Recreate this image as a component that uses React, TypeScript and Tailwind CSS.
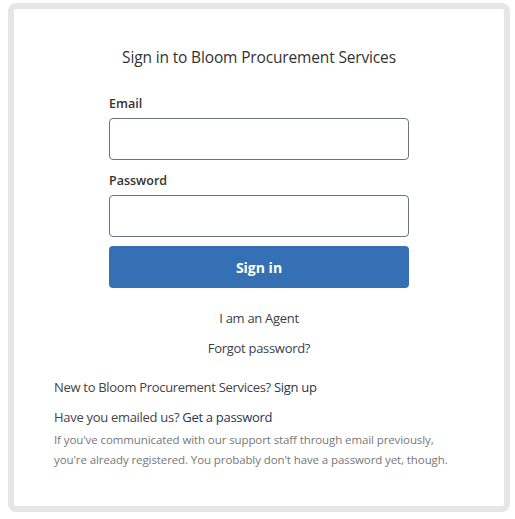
import { useState } from 'react'

const FONT = '"Open Sans", "Noto Sans", "Liberation Sans", sans-serif'

export default function App() {
  const [email, setEmail] = useState('')
  const [password, setPassword] = useState('')

  return (
    <div className="w-[515px] h-[519px] bg-white pl-2 pt-[3px]" style={{ fontFamily: FONT }}>
      <div className="w-[502px] h-[509px] border-[6px] border-[#e6e6e6] rounded-lg bg-white pt-[38px]">
        <h1 className="text-center text-[15.5px] leading-[20px] text-[#333] tracking-[-0.15px]">
          Sign in to Bloom Procurement Services
        </h1>

        <form className="w-[300px] mx-auto mt-[28px]" onSubmit={(e) => e.preventDefault()}>
          <label className="block text-[12.5px] leading-[18px] font-semibold text-[#333]">Email</label>
          <input
            type="email"
            value={email}
            onChange={(e) => setEmail(e.target.value)}
            className="block w-full h-[42px] mt-[5px] border border-[#6b7280] rounded-[4px] px-3 outline-none"
          />

          <label className="block text-[12.5px] leading-[18px] font-semibold text-[#333] mt-[12px]">Password</label>
          <input
            type="password"
            value={password}
            onChange={(e) => setPassword(e.target.value)}
            className="block w-full h-[42px] mt-[5px] border border-[#6b7280] rounded-[4px] px-3 outline-none"
          />

          <button
            type="submit"
            className="block w-full h-[42px] mt-[9px] bg-[#3670b4] rounded-[4px] text-white text-[14px] font-bold"
          >
            Sign in
          </button>
        </form>

        <div className="text-center text-[13px] leading-[20px] text-[#3a3f4a] tracking-[-0.3px]">
          <div className="mt-[20px]">I am an Agent</div>
          <div className="mt-[10px]">Forgot password?</div>
        </div>

        <div className="pl-[40px] text-[13px] leading-[20px] text-[#444] tracking-[-0.3px]">
          <div className="mt-[19px]">
            New to Bloom Procurement Services? <span className="text-[#253858]">Sign up</span>
          </div>
          <div className="mt-[10px]">
            Have you emailed us? <span className="text-[#253858]">Get a password</span>
          </div>
          <p className="mt-[3px] text-[11.5px] leading-[20px] text-[#777] tracking-[-0.1px]">
            If you've communicated with our support staff through email previously,
            <br />
            you're already registered. You probably don't have a password yet, though.
          </p>
        </div>
      </div>
    </div>
  )
}
